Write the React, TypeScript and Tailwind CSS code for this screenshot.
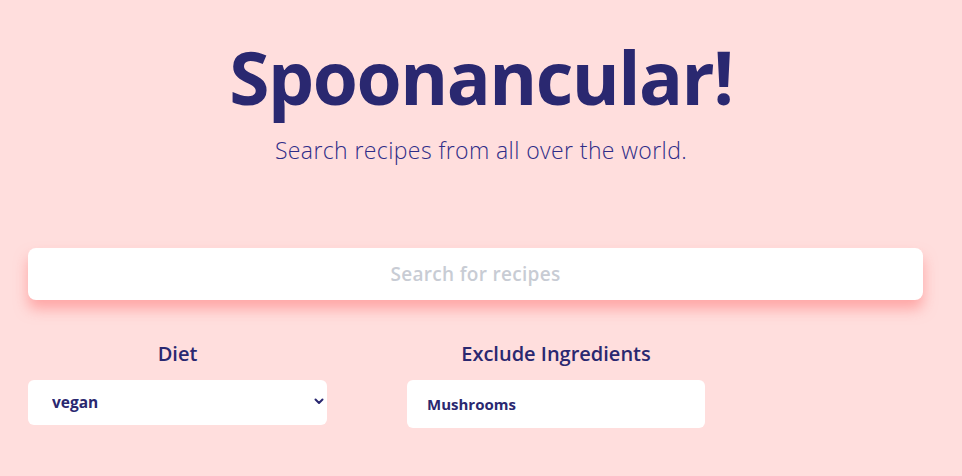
import { useState } from 'react';

const font = { fontFamily: '"Open Sans", Lato, sans-serif' };

export default function App() {
  const [diet, setDiet] = useState('vegan');
  const [exclude, setExclude] = useState('Mushrooms');

  return (
    <div className="min-h-screen w-full bg-[#ffdedd] text-[#2a2870]" style={font}>
      {/* Header */}
      <header className="flex flex-col items-center pt-[40px]">
        <h1 className="text-[73px] font-bold leading-[73px] tracking-[-1.5px]">Spoonancular!</h1>
        <p className="mt-[23px] text-[23px] font-light leading-[28px] tracking-[0.4px] text-[#2f2d88]">
          Search recipes from all over the world.
        </p>
      </header>

      <main className="px-[28px] pt-[84px]">
        {/* Search */}
        <input
          type="text"
          placeholder="Search for recipes"
          className="block h-[52px] w-[895px] rounded-lg bg-white text-center text-[19px] font-semibold tracking-[0.3px] text-[#2a2870] shadow-[0_9px_14px_rgba(255,120,120,0.55)] outline-none placeholder:text-[#c8ccd4]"
        />

        {/* Filters */}
        <div className="mt-[42px] flex gap-[80px]">
          <div className="flex w-[299px] flex-col items-center">
            <label className="text-[20px] font-semibold leading-[24px]">Diet</label>
            <div className="relative mt-[14px] w-full">
              <select
                value={diet}
                onChange={(e) => setDiet(e.target.value)}
                className="block h-[45px] w-full appearance-none rounded-md bg-white pl-[24px] text-[15.5px] font-bold text-[#2a2870] outline-none"
              >
                <option value="vegan">vegan</option>
                <option value="vegetarian">vegetarian</option>
                <option value="gluten free">gluten free</option>
                <option value="ketogenic">ketogenic</option>
              </select>
              <svg
                className="pointer-events-none absolute right-[3px] top-[18px]"
                width="10"
                height="8"
                viewBox="0 0 10 8"
                fill="none"
                stroke="#2a2870"
                strokeWidth="2"
                strokeLinecap="round"
                strokeLinejoin="round"
              >
                <polyline points="1.5 1.5 5 5 8.5 1.5" />
              </svg>
            </div>
          </div>

          <div className="flex w-[298px] flex-col items-center">
            <label className="text-[20px] font-semibold leading-[24px]">Exclude Ingredients</label>
            <input
              type="text"
              value={exclude}
              onChange={(e) => setExclude(e.target.value)}
              className="mt-[14px] block h-[48px] w-full rounded-md bg-white pl-[20px] text-[15px] font-bold text-[#2a2870] outline-none"
            />
          </div>
        </div>
      </main>
    </div>
  );
}
